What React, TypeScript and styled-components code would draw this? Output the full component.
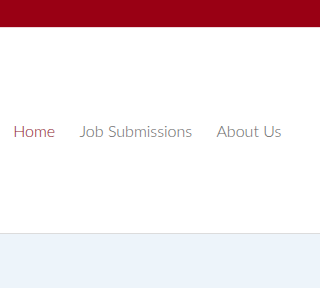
import React from "react";
import styled, { createGlobalStyle } from "styled-components";

const Global = createGlobalStyle`
  html, body { margin: 0; padding: 0; background: #eef4fa; }
  body { font-family: Lato, "Open Sans", sans-serif; }
`;

const Page = styled.div`
  width: 100%;
  height: 100vh;
  display: flex;
  flex-direction: column;
  overflow: hidden;
`;

const TopBar = styled.div`
  height: 27px;
  background: #990014;
  border-bottom: 1px solid #f0d6da;
  flex-shrink: 0;
`;

const Header = styled.header`
  height: 205px;
  background: #ffffff;
  border-bottom: 1px solid #dcdcdc;
  display: flex;
  align-items: center;
  flex-shrink: 0;
`;

const Nav = styled.nav`
  display: flex;
  align-items: center;
  padding-left: 1px;
`;

const NavLink = styled.a<{ $active?: boolean }>`
  font-family: Lato, sans-serif;
  font-weight: 300;
  font-size: 16px;
  padding: 0 12.2px;
  color: ${(p) => (p.$active ? "#8c1c2e" : "#666666")};
  text-decoration: none;
  white-space: nowrap;
  cursor: pointer;
`;

const Body = styled.div`
  flex: 1;
  background: #edf4fa;
`;

export default function App() {
  return (
    <Page>
      <Global />
      <TopBar />
      <Header>
        <Nav>
          <NavLink $active>Home</NavLink>
          <NavLink>Job Submissions</NavLink>
          <NavLink>About Us</NavLink>
        </Nav>
      </Header>
      <Body />
    </Page>
  );
}
